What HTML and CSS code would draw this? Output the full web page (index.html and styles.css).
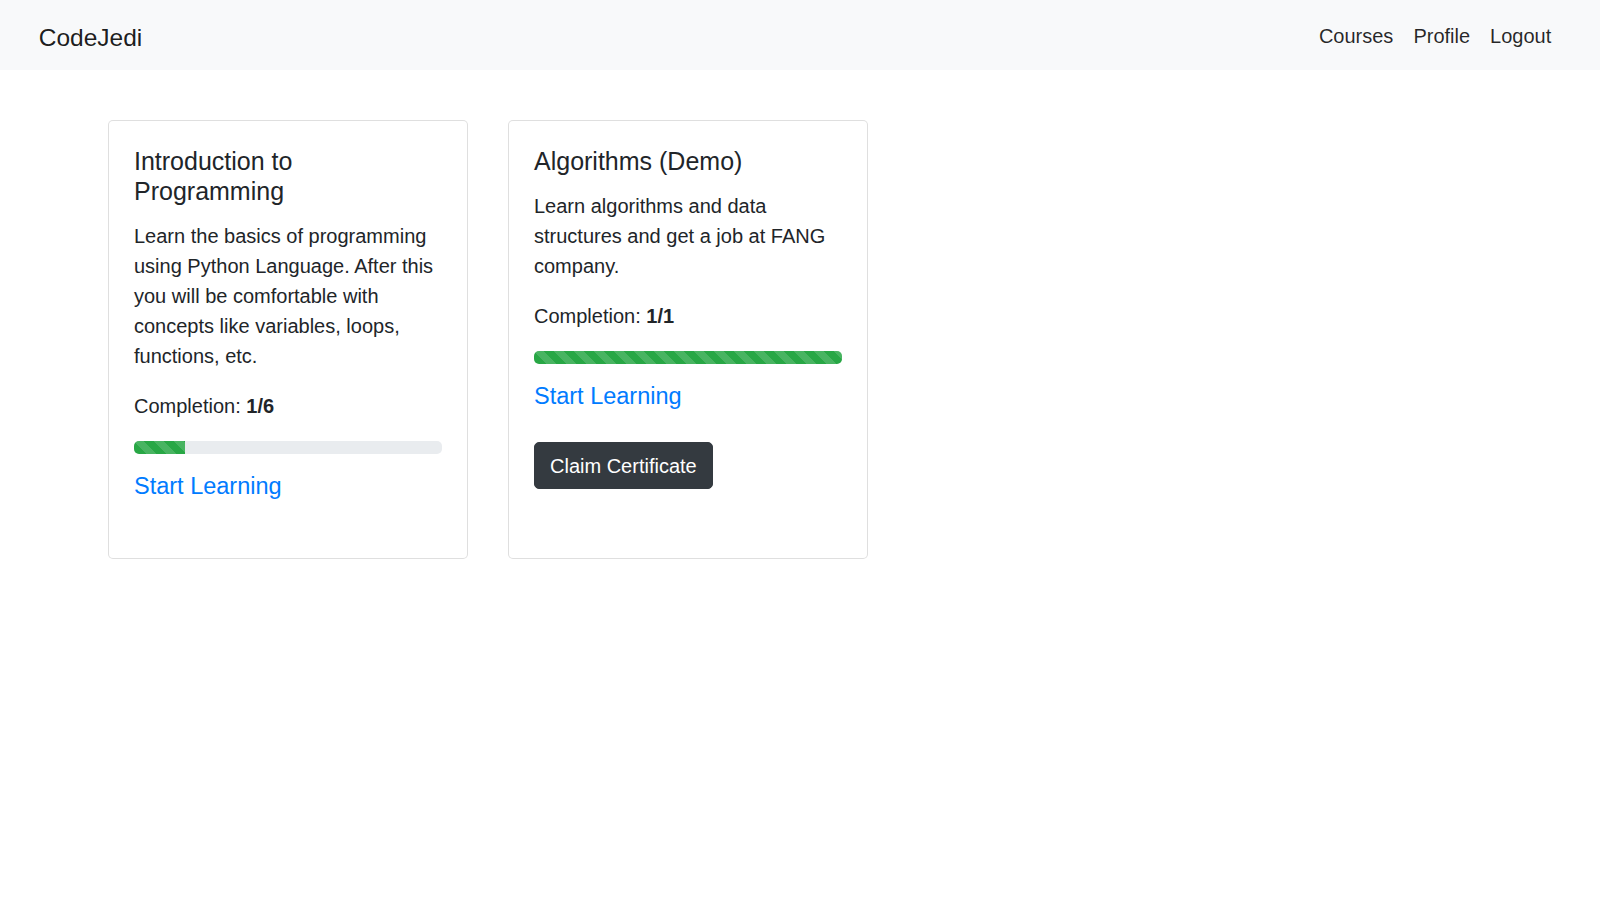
FILE: index.html
```html
<!DOCTYPE html>
<html lang="en">
<head>
<meta charset="utf-8">
<title>CodeJedi</title>
<link rel="stylesheet" href="styles.css">
</head>
<body>
<nav class="navbar">
  <a class="brand" href="#">CodeJedi</a>
  <ul class="nav">
    <li><a class="nav-link" href="#">Courses</a></li>
    <li><a class="nav-link" href="#">Profile</a></li>
    <li><a class="nav-link" href="#">Logout</a></li>
  </ul>
</nav>
<main class="courses">
  <div class="card">
    <h5 class="card-title">Introduction to Programming</h5>
    <p class="card-text">Learn the basics of programming using Python Language. After this you will be comfortable with concepts like variables, loops, functions, etc.</p>
    <p class="completion">Completion: <b>1/6</b></p>
    <div class="progress"><div class="progress-bar" style="width: 16.67%"></div></div>
    <a class="start" href="#">Start Learning</a>
  </div>
  <div class="card">
    <h5 class="card-title">Algorithms (Demo)</h5>
    <p class="card-text">Learn algorithms and data structures and get a job at FANG company.</p>
    <p class="completion">Completion: <b>1/1</b></p>
    <div class="progress"><div class="progress-bar" style="width: 100%"></div></div>
    <a class="start" href="#">Start Learning</a>
    <div><button class="btn-dark" type="button">Claim Certificate</button></div>
  </div>
</main>
</body>
</html>
```

FILE: styles.css
```css
* { box-sizing: border-box; }
html, body { margin: 0; padding: 0; }
body {
  font-family: "Liberation Sans", Arial, sans-serif;
  font-size: 20px;
  line-height: 1.5;
  color: #212529;
  background: #fff;
}
a { text-decoration: none; }

.navbar {
  display: flex;
  align-items: center;
  justify-content: space-between;
  height: 70px;
  padding: 0 38.75px;
  background: #f8f9fa;
}
.brand {
  padding-top: 5px;
  font-size: 24.5px;
  line-height: 37.5px;
  color: rgba(0,0,0,.9);
}
.nav {
  display: flex;
  list-style: none;
  margin: 0;
  padding: 2px 0 0;
}
.nav-link {
  display: block;
  padding: 10px 10px;
  color: rgba(0,0,0,.85);
}

.courses {
  display: flex;
  align-items: stretch;
  gap: 40px;
  padding: 50px 0 0 108px;
}
.card {
  width: 360px;
  padding: 25px;
  border: 1px solid rgba(0,0,0,.125);
  border-radius: 5px;
  background: #fff;
}
.card-title {
  margin: 0 0 15px;
  font-size: 25px;
  font-weight: 400;
  line-height: 30px;
}
.card-text, .completion {
  margin: 0 0 20px;
}
.completion b { font-weight: 700; }
.progress {
  height: 12.5px;
  margin-bottom: 17px;
  background: #e9ecef;
  border-radius: 5px;
  overflow: hidden;
}
.progress-bar {
  height: 100%;
  background-color: #28a745;
  background-image: linear-gradient(45deg, rgba(255,255,255,.15) 25%, transparent 25%, transparent 50%, rgba(255,255,255,.15) 50%, rgba(255,255,255,.15) 75%, transparent 75%, transparent);
  background-size: 20px 20px;
}
.start {
  display: block;
  font-size: 23.5px;
  line-height: 30px;
  color: #007bff;
}
.btn-dark {
  margin: 31.5px 0 43.5px;
  padding: 7.5px 15px;
  font-family: inherit;
  font-size: 20px;
  line-height: 30px;
  color: #fff;
  background: #343a40;
  border: 1px solid #343a40;
  border-radius: 5px;
}
```
